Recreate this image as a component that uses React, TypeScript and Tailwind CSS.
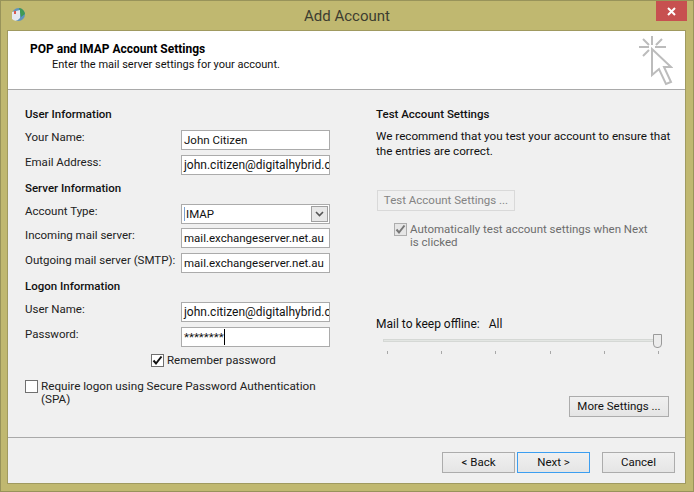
import React from "react";

const Field: React.FC<{ label: string; value: string; className?: string; valueClass?: string }> = ({
	label,
	value,
	className,
	valueClass,
}) => (
	<div className={`flex items-start ${className ?? ""}`}>
		<span className="w-[156px] shrink-0 leading-[16px] -mt-[1px] whitespace-nowrap">{label}</span>
		<div
			className={`w-[149px] h-[20px] bg-white border border-[#ababab] pl-[2px] leading-[18px] overflow-hidden whitespace-nowrap text-[#111] ${
				valueClass ?? ""
			}`}
		>
			{value}
		</div>
	</div>
);

const SectionTitle: React.FC<{ children: React.ReactNode; className?: string }> = ({ children, className }) => (
	<div className={`font-medium leading-[16px] text-[#111] ${className ?? ""}`}>{children}</div>
);

const Check: React.FC<{ checked?: boolean; disabled?: boolean }> = ({ checked, disabled }) => (
	<span
		className={`flex items-center justify-center w-[13px] h-[13px] shrink-0 border ${
			disabled ? "border-[#adadad] bg-[#e6e6e6]" : "border-[#707070] bg-white"
		}`}
	>
		{checked && (
			<svg width="11" height="11" viewBox="0 0 11 11">
				<path d="M1.5 5.5 L4 8.5 L9.5 1.5" fill="none" stroke={disabled ? "#777" : "#111"} strokeWidth="2" />
			</svg>
		)}
	</span>
);

const WinButton: React.FC<{ children: React.ReactNode; focused?: boolean; className?: string }> = ({
	children,
	focused,
	className,
}) => (
	<div
		className={`h-[21px] flex items-center justify-center border bg-gradient-to-b from-[#f0f0f0] to-[#e5e5e5] text-[#111] ${
			focused ? "border-[#3c9ef0]" : "border-[#acacac]"
		} ${className ?? ""}`}
	>
		{children}
	</div>
);

const CursorIcon = () => (
	<svg width="34" height="50" viewBox="0 0 34 50" className="mr-[12px] mt-[5px]" fill="none" stroke="#bcbcbc">
		<path d="M13 0v9M0 11h10M16 11h11M4 3l6 6M23 3l-6 6M4 20l6-6" strokeWidth="2" />
		<path d="M13 13v26l7-6 7 15 5-2-7-15h7z" strokeWidth="2" fill="#fff" />
	</svg>
);

export default function App() {
	return (
		<div
			className="w-[694px] h-[492px] flex flex-col bg-[#c0b870] border border-[#98935a] text-[11.5px] text-[#222] overflow-hidden"
			style={{ fontFamily: 'Roboto, "Noto Sans", sans-serif' }}
		>
			<div className="h-[29px] shrink-0 flex items-center relative">
				<svg width="16" height="16" viewBox="0 0 16 16" className="absolute left-[9px] top-[6px]">
					<circle cx="8.5" cy="7.5" r="6.5" fill="#5f93bd" />
					<path d="M9 1a6.5 6.5 0 0 1 6 6l-4 3-1-5z" fill="#3f9a56" />
					<path d="M2 5l8-2v8q-4 5-8 1z" fill="#e4e8f0" />
					<path d="M4 4h2v3H4z" fill="#d85a50" />
				</svg>
				<div className="flex-1 text-center text-[15px] text-[#3d3d30] leading-none pt-[1px]">Add Account</div>
				<div className="absolute right-[6px] top-0 w-[31px] h-[20px] bg-[#c75050] flex items-center justify-center">
					<svg width="9" height="9" viewBox="0 0 9 9">
						<path d="M1 1l7 7M8 1L1 8" stroke="#fff" strokeWidth="2" />
					</svg>
				</div>
			</div>

			<div className="w-[679px] h-[454px] ml-[6px] flex flex-col bg-[#f0f0f0] border border-[#a09a60]">
				<div className="h-[59px] shrink-0 flex justify-between bg-white border-b border-[#a9a9a9]">
					<div className="pl-[22px] pt-[10px]">
						<div className="font-bold text-[12px] leading-[16px] text-black">POP and IMAP Account Settings</div>
						<div className="pl-[22px] text-[11px] leading-[15px] text-[#111]">Enter the mail server settings for your account.</div>
					</div>
					<CursorIcon />
				</div>

				<div className="flex-1 flex pl-[17px]">
					<div className="w-[351px] shrink-0 pt-[16px]">
						<SectionTitle>User Information</SectionTitle>
						<Field label="Your Name:" value="John Citizen" className="mt-[8px]" />
						<Field label="Email Address:" value="john.citizen@digitalhybrid.com.au" className="mt-[5px]" valueClass="text-[12px]" />
						<SectionTitle className="mt-[5px]">Server Information</SectionTitle>
						<div className="flex items-start mt-[8px]">
							<span className="w-[156px] shrink-0 leading-[16px] -mt-[1px]">Account Type:</span>
							<div className="w-[149px] h-[20px] bg-white border border-[#ababab] pl-[2px] pr-[1px] flex items-center justify-between">
								<span className="flex items-center gap-[1px] leading-[18px] text-[#111]">
									<span className="w-px h-[14px] bg-[#7da2ce]" />
									IMAP
								</span>
								<span className="w-[17px] h-[16px] flex items-center justify-center bg-[#e8e8e8] border border-[#a0a0a0]">
									<svg width="9" height="6" viewBox="0 0 9 6">
										<path d="M1 1l3.5 3.5L8 1" fill="none" stroke="#555" strokeWidth="1.6" />
									</svg>
								</span>
							</div>
						</div>
						<Field label="Incoming mail server:" value="mail.exchangeserver.net.au" className="mt-[4px]" />
						<Field label="Outgoing mail server (SMTP):" value="mail.exchangeserver.net.au" className="mt-[5px]" />
						<SectionTitle className="mt-[5px]">Logon Information</SectionTitle>
						<Field label="User Name:" value="john.citizen@digitalhybrid.com.au" className="mt-[8px]" valueClass="text-[12px]" />
						<div className="flex items-start mt-[5px]">
							<span className="w-[156px] shrink-0 leading-[16px] -mt-[1px]">Password:</span>
							<div className="w-[149px] h-[20px] bg-white border border-[#ababab] pl-[2px] flex items-center text-[#111] leading-[18px]">
								<span>********</span>
								<span className="w-px h-[16px] bg-black" />
							</div>
						</div>
						<div className="flex items-center gap-[3px] ml-[126px] mt-[7px] h-[13px]">
							<Check checked />
							<span>Remember password</span>
						</div>
						<div className="flex items-start gap-[3px] mt-[13px] text-[11.7px]">
							<Check />
							<span className="w-[290px] leading-[13px]">Require logon using Secure Password Authentication (SPA)</span>
						</div>
					</div>

					<div className="w-[300px] pt-[16px] flex flex-col">
						<SectionTitle>Test Account Settings</SectionTitle>
						<div className="mt-[7px] leading-[15px] text-[#111] text-[11.7px] whitespace-nowrap">
							We recommend that you test your account to ensure that
							<br />
							the entries are correct.
						</div>
						<div className="mt-[31px] ml-[1px] w-[138px] h-[21px] flex items-center justify-center border border-[#d9d9d9] text-[#838383]">
							Test Account Settings ...
						</div>
						<div className="flex items-start gap-[3px] ml-[18px] mt-[12px] text-[#6d6d6d]">
							<Check checked disabled />
							<span className="w-[240px] leading-[13px]">Automatically test account settings when Next is clicked</span>
						</div>
						<div className="mt-[67px] leading-[16px] text-[12px] text-[#111] whitespace-pre">Mail to keep offline:   All</div>
						<div className="relative mt-[7px] ml-[7px] w-[279px] h-[3px] bg-[#e3e6e3] border border-[#d5d8d5]">
							<div className="absolute right-[-1px] top-[-6px] w-[9px] h-[14px] bg-[#ececec] border border-[#9a9a9a] rounded-b-[4px]" />
						</div>
						<div className="mt-[9px] ml-[11px] w-[272px] flex justify-between">
							{[0, 1, 2, 3, 4, 5].map((i) => (
								<span key={i} className="w-px h-[3px] bg-[#a8a8a8]" />
							))}
						</div>
						<div className="ml-[193px] mt-[42px]">
							<WinButton className="w-[100px]">More Settings ...</WinButton>
						</div>
					</div>
				</div>

				<div className="h-[46px] shrink-0 border-t border-[#a9a9a9] flex justify-end pt-[14px] pr-[10px]">
					<WinButton className="w-[73px]">&lt; Back</WinButton>
					<WinButton focused className="w-[73px] ml-[2px]">Next &gt;</WinButton>
					<WinButton className="w-[73px] ml-[12px]">Cancel</WinButton>
				</div>
			</div>
		</div>
	);
}
